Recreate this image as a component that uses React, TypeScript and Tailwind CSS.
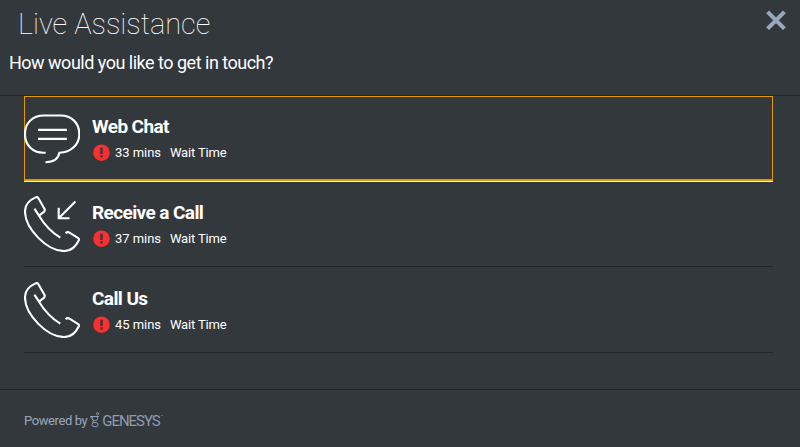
import React from 'react';
import { clsx } from 'clsx';

type ChannelIcon = 'chat' | 'receive' | 'call';

interface Channel {
  name: string;
  icon: ChannelIcon;
  wait: string;
}

const CHANNELS: Channel[] = [
  { name: 'Web Chat', icon: 'chat', wait: '33 mins' },
  { name: 'Receive a Call', icon: 'receive', wait: '37 mins' },
  { name: 'Call Us', icon: 'call', wait: '45 mins' },
];

const ChatIcon = () => (
  <svg viewBox="0 0 56 56" className="w-14 h-14 shrink-0" fill="none" stroke="white" strokeWidth="2.1">
    <path d="M21.7 42.7H19.5C8.5 42.7 1 35 1 24S8.5 5.5 20 5.5H36.5C47.5 5.5 55.3 13 55.3 24C55.3 34 47.5 42.7 35.4 42.7C34.4 49 29.5 52.2 21.5 52.2" />
    <path d="M14 19.9H42.8M14 28.9H42.8" />
  </svg>
);

const PhoneIcon = ({ incoming }: { incoming?: boolean }) => (
  <svg viewBox="0 0 56 56" className="w-14 h-14 shrink-0" fill="none" stroke="white" strokeWidth="2.1" strokeLinejoin="round">
    <path d="M10.4 12.7L15 19.7C20 28 28 36.5 36.3 41.7" />
    <path d="M15 19.7L19.6 16.2C20.8 15.2 21.1 13.8 20.3 12.4L14.4 2.2C13.8 1.1 12.8 .8 11.6 1.4C4 4.7 1 9 1 15.5C1 32.5 23 55 40 55C47 55 51.7 51 54.8 44.2C55.2 43.2 55 42.6 54.2 42.2L45.5 36.7C44.2 35.9 42.8 36 41.6 37.2" />
    {incoming && <path strokeLinejoin="miter" d="M51.4 5.6L35 22M34.7 11.8V22.3H45.5" />}
  </svg>
);

const AlertIcon = () => (
  <svg viewBox="0 0 18 18" className="w-[18px] h-[18px] shrink-0">
    <circle cx="9.5" cy="8.7" r="8.3" fill="#f8302f" />
    <path d="M8.3 3.7h2.4v6.3H8.3zM8.3 11.3h2.4v2.3H8.3z" fill="#33383d" />
  </svg>
);

const ChannelRow = ({ channel, focused }: { channel: Channel; focused: boolean }) => (
  <button
    className={clsx(
      'flex w-full items-start text-left outline-none',
      focused
        ? 'h-[85px] pt-3.5 shadow-[inset_1px_1px_0_#e59700,inset_-1px_-2px_0_#e59700,0_1px_0_#fff]'
        : 'h-[86px] border-b border-[#222529] pt-[15px]'
    )}
  >
    {channel.icon === 'chat' ? <ChatIcon /> : <PhoneIcon incoming={channel.icon === 'receive'} />}
    <span className="ml-3 mt-[5px] flex flex-col">
      <span className="text-[19px] leading-6 font-bold tracking-[-0.6px]">{channel.name}</span>
      <span className="mt-[5px] flex items-center text-[13px] leading-[18px]">
        <AlertIcon />
        <span className="ml-[5px] tracking-[-0.05px]">{channel.wait}</span>
        <span className="ml-[9px] tracking-[-0.15px]">Wait Time</span>
      </span>
    </span>
  </button>
);

const GenesysLogo = () => (
  <span className="ml-[3px] flex items-center text-[#8e9bb0]">
    <svg viewBox="0 0 10 16" className="-mt-[2px] w-2.5 h-4" fill="none" stroke="currentColor" strokeWidth="1">
      <circle cx="7.6" cy="1.7" r="1.1" />
      <path d="M.3 4.5H8.9M.6 4.5C.6 5.7 1.3 6.3 2.3 6.5" />
      <path d="M2.4 4.7V6.8Q2.4 8.6 4.2 8.6H5.6Q7.4 8.6 7.4 6.8V4.7" />
      <rect x="2" y="10.6" width="6" height="4" rx="2" />
      <path d="M3.2 8.4L2.9 11" />
    </svg>
    <span className="ml-[2px] text-[15px] leading-4 tracking-[-1.05px]">GENESYS</span>
    <span className="-mt-2 ml-px text-[4px]">™</span>
  </span>
);

export default function App() {
  return (
    <div className="flex h-[447px] w-[800px] flex-col bg-[#33383d] font-['Roboto',sans-serif] text-white">
      <header className="flex h-24 justify-between border-b border-[#222529]">
        <div className="pl-[9px]">
          <h1 className="pt-[6px] pl-[9px] text-[29px] leading-9 font-thin">Live Assistance</h1>
          <p className="mt-[10px] text-[18px] leading-[22px] tracking-[-0.5px]">How would you like to get in touch?</p>
        </div>
        <button aria-label="Close" className="mt-[10px] mr-[14px] h-5 w-5">
          <svg viewBox="0 0 20 20" className="h-5 w-5" stroke="#98a7bb" strokeWidth="4">
            <path d="M1.6 1.9L18.4 18.7M18.4 1.9L1.6 18.7" />
          </svg>
        </button>
      </header>

      <main className="flex-1 pr-[27px] pl-6">
        {CHANNELS.map((channel, i) => (
          <ChannelRow key={channel.name} channel={channel} focused={i === 0} />
        ))}
      </main>

      <footer className="flex h-[58px] items-center border-t border-[#222529] pt-[5px] pl-6 text-[13px] text-[#98a7bb]">
        <span className="tracking-[-0.4px]">Powered by</span>
        <GenesysLogo />
      </footer>
    </div>
  );
}
